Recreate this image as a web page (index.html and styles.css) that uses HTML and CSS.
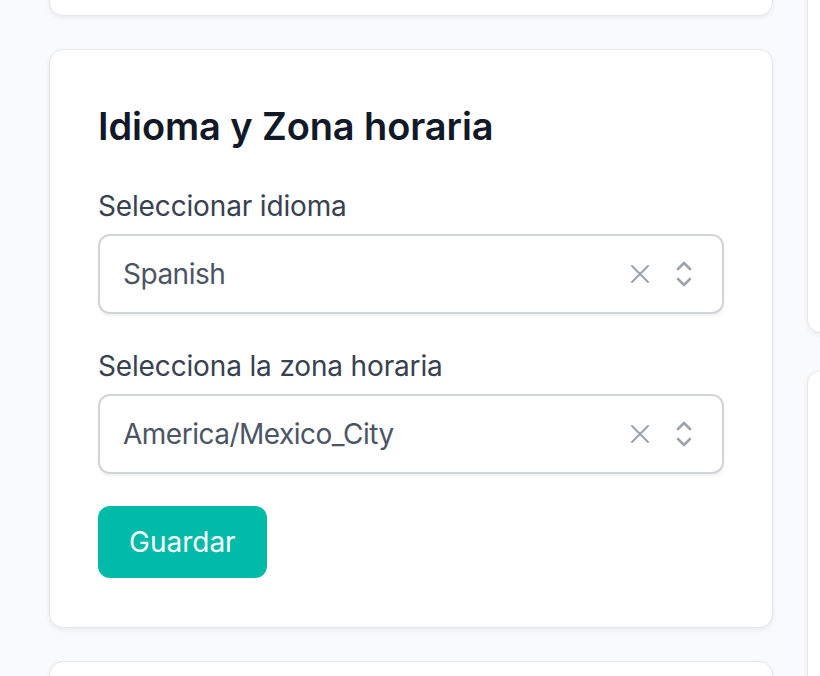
FILE: index.html
```html
<!DOCTYPE html>
<html lang="es">
<head>
<meta charset="utf-8">
<title>Idioma y Zona horaria</title>
<link rel="stylesheet" href="styles.css">
</head>
<body>
<div class="page">
  <div class="col col-main">
    <section class="card card-prev"></section>
    <section class="card card-form">
      <h2 class="card-title">Idioma y Zona horaria</h2>
      <label class="field-label">Seleccionar idioma</label>
      <div class="select">
        <span class="select-value">Spanish</span>
        <span class="select-icons">
          <svg class="icon-x" viewBox="0 0 20 20" width="20" height="20"><path d="M2 2 L18 18 M18 2 L2 18" fill="none" stroke="currentColor" stroke-width="2" stroke-linecap="round"/></svg>
          <svg class="icon-chev" viewBox="0 0 16 28" width="16" height="28"><path d="M2 9 L8 3 L14 9 M2 19 L8 25 L14 19" fill="none" stroke="currentColor" stroke-width="2.6" stroke-linecap="round" stroke-linejoin="round"/></svg>
        </span>
      </div>
      <label class="field-label field-label-2">Selecciona la zona horaria</label>
      <div class="select">
        <span class="select-value">America/Mexico_City</span>
        <span class="select-icons">
          <svg class="icon-x" viewBox="0 0 20 20" width="20" height="20"><path d="M2 2 L18 18 M18 2 L2 18" fill="none" stroke="currentColor" stroke-width="2" stroke-linecap="round"/></svg>
          <svg class="icon-chev" viewBox="0 0 16 28" width="16" height="28"><path d="M2 9 L8 3 L14 9 M2 19 L8 25 L14 19" fill="none" stroke="currentColor" stroke-width="2.6" stroke-linecap="round" stroke-linejoin="round"/></svg>
        </span>
      </div>
      <button class="btn-primary" type="button">Guardar</button>
    </section>
    <section class="card card-next"></section>
  </div>
  <div class="col col-side">
    <section class="card side-a"></section>
    <section class="card side-b"></section>
  </div>
</div>
</body>
</html>
```

FILE: styles.css
```css
html, body {
  margin: 0;
  padding: 0;
  background: #f9fafb;
  font-family: Inter, "Noto Sans", "Liberation Sans", sans-serif;
  overflow: hidden;
}
.page {
  display: flex;
  gap: 34px;
  padding-left: 49px;
  height: 676px;
  overflow: hidden;
}
.col {
  display: flex;
  flex-direction: column;
  gap: 33px;
}
.col-main {
  width: 724px;
  flex: none;
  margin-top: -184px;
}
.col-side {
  flex: none;
  width: 400px;
  margin-top: -200px;
  gap: 37px;
}
.card {
  background: #ffffff;
  border: 1px solid #e5e7eb;
  border-radius: 14px;
  box-shadow: 0 2px 5px rgba(17, 24, 39, 0.07);
  box-sizing: border-box;
  flex: none;
}
.card-prev { height: 200px; }
.card-next { height: 200px; }
.side-a { height: 533px; }
.side-b { height: 500px; }
.card-form {
  padding: 48px 48px 49px 48px;
  display: flex;
  flex-direction: column;
  align-items: flex-start;
}
.card-title {
  margin: 0 0 32px 0;
  font-size: 38px;
  line-height: 56px;
  font-weight: 600;
  color: #111827;
  letter-spacing: -0.1px;
}
.field-label {
  display: block;
  font-size: 28px;
  line-height: 40px;
  font-weight: 400;
  color: #374151;
  margin-bottom: 8px;
  letter-spacing: -0.15px;
}
.field-label-2 { margin-top: 32px; }
.select {
  align-self: stretch;
  box-sizing: border-box;
  height: 80px;
  border: 2px solid #d1d5db;
  border-radius: 12px;
  background: #fff;
  box-shadow: 0 2px 3px rgba(17, 24, 39, 0.06);
  display: flex;
  align-items: center;
  padding: 0 30px 0 23px;
}
.select-value {
  flex: 1;
  font-size: 28px;
  line-height: 40px;
  color: #4b5563;
  letter-spacing: -0.5px;
}
.select-icons {
  display: flex;
  align-items: center;
  gap: 26px;
  color: #9ca3af;
}
.icon-x { display: block; }
.icon-chev { display: block; }
.btn-primary {
  margin-top: 32px;
  height: 72px;
  padding: 0 31px;
  border: none;
  border-radius: 12px;
  background: #00bba7;
  color: #ffffff;
  font-family: inherit;
  font-size: 28px;
  line-height: 40px;
  font-weight: 400;
  cursor: pointer;
}
```
